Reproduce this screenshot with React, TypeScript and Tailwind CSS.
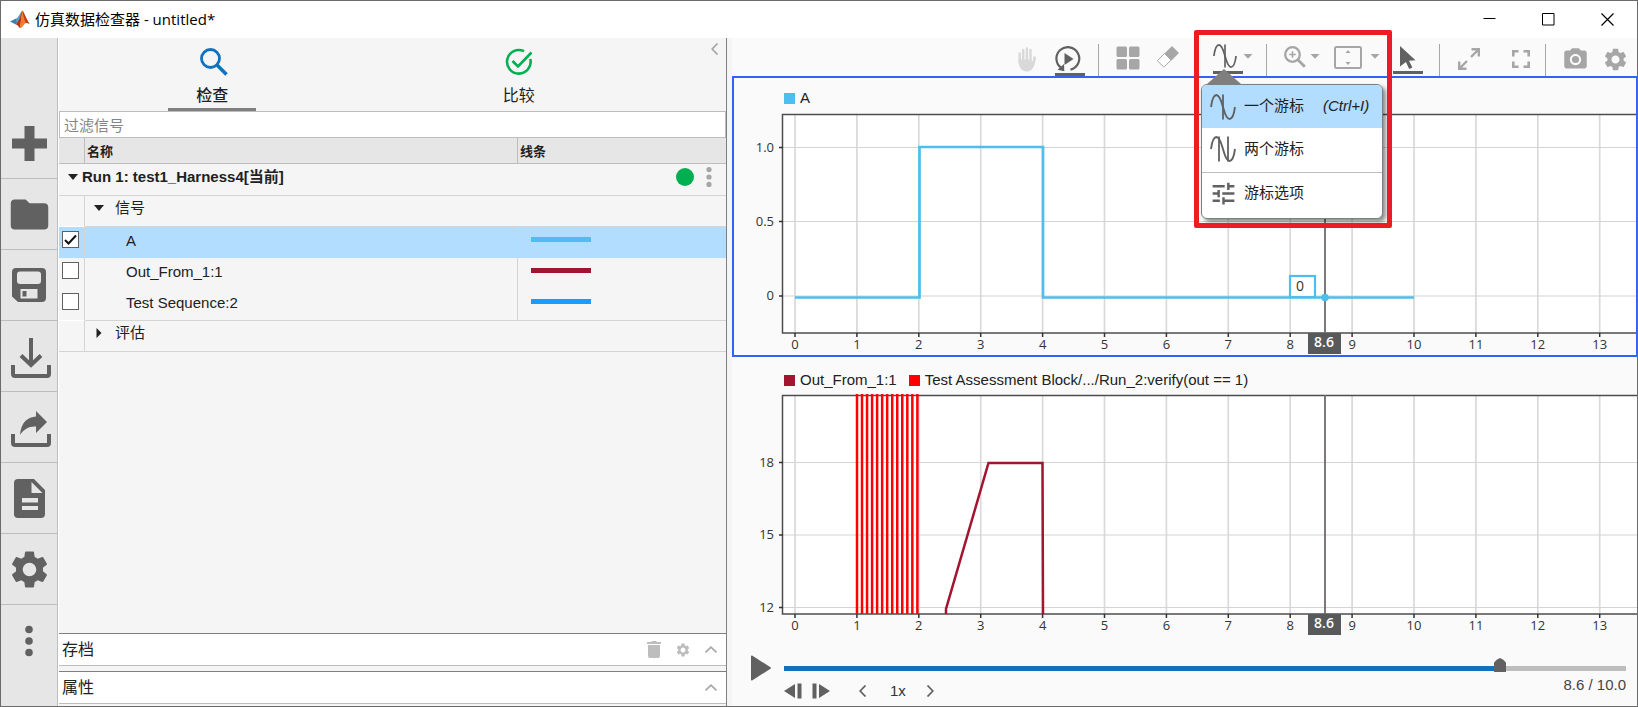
import React, { useState } from "react";
import { MdFolder, MdPhotoCamera, MdSettings, MdTune } from "react-icons/md";

/* ---------- icons ---------- */

function Logo() {
  return (
    <svg width="20" height="19" viewBox="0 0 20 19" aria-hidden="true">
      <path d="M0 11.5L6 8.6l2.8 2-3 3.8z" fill="#3d7fb5" />
      <path d="M6 8.6C8 8 9 5 11.5 1.6L12.6 .6 9.5 9.5 6.6 13z" fill="#5ba3cf" />
      <path d="M5.8 14.4L8.2 11C10.4 8 11 1.6 12.6.4 11.6 5 11.6 11 9.6 18.2 8.6 16 7.4 14.6 5.8 14.4z" fill="#b5330f" />
      <path d="M12.6.4c2 3 3.4 8.2 7 13.6-2.6-1.6-4.2-1.4-5.8 1-1.4 2-2.6 3-4.2 3.2C11 12 11.2 4 12.6.4z" fill="#ef7d2d" />
      <path d="M12.6.4c2 3 3.4 8.2 7 13.6-1.6-1-2.6-1.2-3.6-.8C14 9 13 4 12.6.4z" fill="#c23a12" />
    </svg>
  );
}

const PlusIcon = () => (
  <svg width="35" height="35" viewBox="0 0 35 35" fill="currentColor">
    <path d="M12.5 0h10v12.5H35v10H22.5V35h-10V22.5H0v-10h12.5z" />
  </svg>
);

const SaveIcon = () => (
  <svg width="34" height="34" viewBox="0 0 34 34" fill="currentColor">
    <path
      fillRule="evenodd"
      d="M4 0h26a4 4 0 0 1 4 4v26a4 4 0 0 1-4 4H6L0 28.5V4a4 4 0 0 1 4-4zM8 3.5a3 3 0 0 0-3 3V13a3 3 0 0 0 3 3h18a3 3 0 0 0 3-3V6.5a3 3 0 0 0-3-3zM8.5 21v9.5h17V21zM10.5 23h4v5.5h-4z"
    />
  </svg>
);

const Tray = () => (
  <path d="M2 27v9q0 2 2 2h32q2 0 2-2v-9" fill="none" stroke="currentColor" strokeWidth="4" />
);

const ImportIcon = () => (
  <svg width="40" height="40" viewBox="0 0 40 40">
    <Tray />
    <path d="M20 0v27M10 17.5l10 9.5 10-9.5" fill="none" stroke="currentColor" strokeWidth="4" />
  </svg>
);

const ShareIcon = () => (
  <svg width="40" height="40" viewBox="0 0 40 40">
    <Tray />
    <path d="M9 28C10 15 17 10 25 9.5V4l11 11-11 11v-6.5C18 19 13 22 9 28z" fill="currentColor" />
  </svg>
);

const DocIcon = () => (
  <svg width="31" height="39" viewBox="0 0 31 39" fill="currentColor">
    <path
      fillRule="evenodd"
      d="M4 0h16l11 11v24a4 4 0 0 1-4 4H4a4 4 0 0 1-4-4V4a4 4 0 0 1 4-4zM17.5 3v11h11zM8 19v4.5h16V19zM8 27v4h16v-4z"
    />
  </svg>
);

const DotsIcon = () => (
  <svg width="8" height="32" viewBox="0 0 8 32" fill="currentColor">
    <circle cx="4" cy="4.5" r="3.8" />
    <circle cx="4" cy="16" r="3.8" />
    <circle cx="4" cy="27.5" r="3.8" />
  </svg>
);

const SearchIcon = () => (
  <svg width="28" height="28" viewBox="0 0 28 28" fill="none" stroke="#1171be">
    <circle cx="10.5" cy="10.5" r="9" strokeWidth="2.8" />
    <path d="M17 17l9.5 9.5" strokeWidth="3.6" />
  </svg>
);

const CompareIcon = () => (
  <svg width="28" height="28" viewBox="0 0 28 28" fill="none" stroke="#00b050" strokeWidth="2.6">
    <path d="M19 3.2A11.8 11.8 0 1 0 25.3 11" />
    <path d="M7.5 13l5.5 5.5L26.5 4.5" />
  </svg>
);

const TrashIcon = () => (
  <svg width="14" height="17" viewBox="0 0 14 17" fill="currentColor">
    <path d="M4.5 0h5v1H14v2H0V1h4.5zM1 4h12v11a2 2 0 0 1-2 2H3a2 2 0 0 1-2-2z" />
  </svg>
);

function Chevron({ d }: { d: string }) {
  return (
    <svg width="12" height="12" viewBox="0 0 12 12" fill="none" stroke="currentColor" strokeWidth="1.7">
      <path d={d} />
    </svg>
  );
}

const Down = () => (
  <svg width="10" height="6" viewBox="0 0 10 6" fill="currentColor">
    <path d="M0 0h10L5 6z" />
  </svg>
);

const Caret = () => (
  <svg width="10" height="5" viewBox="0 0 10 5" fill="currentColor">
    <path d="M.5 0h9L5 4.8z" />
  </svg>
);

const Right = () => (
  <svg width="10" height="10" viewBox="0 0 10 10" fill="currentColor">
    <path d="M2.5 0l5 5-5 5z" />
  </svg>
);

const HandIcon = () => (
  <svg width="18" height="25" viewBox="0 0 18 25" fill="none" stroke="#d9d9d9" strokeLinecap="round">
    <path d="M1.7 6.5V15M5.2 3v11M8.9 1.5V14M12.5 3v11" strokeWidth="2.5" />
    <path d="M16.6 10.5c0 4-1.2 6-3 8" strokeWidth="2.6" />
    <path d="M.5 12.500h13.200v2.800l3.300-2.300c.4 5-2.600 11.500-8 11.500S.5 20 .5 14z" fill="#d9d9d9" stroke="none" />
  </svg>
);

const LoopIcon = () => (
  <svg width="26" height="26" viewBox="0 0 26 26" fill="none" stroke="#616161" strokeWidth="2.2">
    <path d="M6.500 22A11.400 11.400 0 1 1 15.500 23.600" />
    <path d="M2.500 23.800L9.300 25.300 9 18z" fill="#616161" stroke="none" />
    <path d="M9.500 7v12L18.500 13z" fill="#616161" stroke="none" />
  </svg>
);

const LayoutIcon = () => (
  <svg width="24" height="24" viewBox="0 0 24 24" fill="currentColor">
    <rect x=".5" y=".5" width="10.500" height="10.500" rx="1.500" />
    <rect x="13" y=".5" width="10.500" height="10.500" rx="1.500" />
    <rect x=".5" y="13" width="10.500" height="10.500" rx="1.500" />
    <rect x="13" y="13" width="10.500" height="10.500" rx="1.500" />
  </svg>
);

const EraserIcon = () => (
  <svg width="22" height="22" viewBox="0 0 22 22">
    <path d="M7.500 7.500L14.500.5q.5-.5 1 0L21.500 6.500q.5.500 0 1L14.500 14.500z" fill="#a6a6a6" />
    <path d="M7.500 7.500L.8 14.200q-.5.500 0 1l5.500 5.500q.5.500 1 0l6.800-6.600z" fill="#fff" stroke="#a6a6a6" />
  </svg>
);

function WaveIcon({ lines, size = 26 }: { lines: number[]; size?: number }) {
  return (
    <svg width={size} height={size} viewBox="0 0 26 26" fill="none" stroke="#616161">
      <path d="M1 13C2 5.500 4 1 6.500 1c3.500.5 5 7 6.500 12s3 12 6.500 12c2.500 0 4.500-4.500 5.500-12" strokeWidth="1.900" />
      {lines.map((x) => (
        <path key={x} d={`M${x} .5v25`} strokeWidth="1.800" />
      ))}
    </svg>
  );
}

const ZoomIcon = () => (
  <svg width="22" height="22" viewBox="0 0 22 22" fill="none" stroke="currentColor">
    <circle cx="8.500" cy="8.500" r="7.300" strokeWidth="2.300" />
    <path d="M8.500 5.200v6.600M5.200 8.500h6.600" strokeWidth="1.600" />
    <path d="M13.800 13.800l7 7" strokeWidth="2.800" />
  </svg>
);

const FitIcon = () => (
  <svg width="28" height="23" viewBox="0 0 28 23" fill="none" stroke="currentColor">
    <rect x="1" y="1" width="26" height="21" rx="1.500" strokeWidth="2" />
    <path d="M11.500 7h5L14 4zM11.500 16h5L14 19z" fill="currentColor" stroke="none" />
  </svg>
);

const PointerIcon = () => (
  <svg width="16" height="23" viewBox="0 0 16 23" fill="#616161">
    <path d="M0 0l15.500 14.300-6.500.5 3.400 6.700-3.200 1.400-3.300-6.900L0 20.500z" />
  </svg>
);

const ExpandIcon = () => (
  <svg width="22" height="22" viewBox="0 0 22 22" fill="none" stroke="currentColor" strokeWidth="2.400">
    <path d="M13.500 1.200h7.300v7.300M20.500 1.500L13 9M8.500 20.800H1.200v-7.300M1.500 20.500L9 13" />
  </svg>
);

const FullscreenIcon = () => (
  <svg width="18" height="18" viewBox="0 0 18 18" fill="none" stroke="currentColor" strokeWidth="2.600">
    <path d="M1.300 6.500V1.300H6.500M11.500 1.300h5.200V6.500M16.700 11.500v5.200H11.500M6.500 16.700H1.300V11.500" />
  </svg>
);

/* ---------- chart ---------- */

const X0 = 61;
const STEP = 61.9;
const BOTTOM = 220;
const CURSOR = 591;

type Tick = { label: string; y: number };

function Chart({ ticks, label, children }: { ticks: Tick[]; label: string; children: React.ReactNode }) {
  const xs = Array.from({ length: 14 }, (_, i) => i);
  return (
    <svg className="block h-[242px] w-full" role="img" aria-label={label}>
      <rect x="48" y="1" width="3000" height="219" fill="#fff" />
      {xs.map((i) => (
        <path key={i} d={`M${X0 + i * STEP} 1V${BOTTOM}`} stroke="#d9d9d9" strokeWidth="1.700" />
      ))}
      {ticks.map((t) => (
        <path key={t.label} d={`M48 ${t.y}H3000`} stroke="#d4d4d4" strokeWidth="1.200" />
      ))}
      <rect x="48.500" y="1.500" width="3000" height="218.500" fill="none" stroke="#4d4d4d" strokeWidth="1.500" />
      <g className="font-['Open_Sans','Noto_Sans',sans-serif] text-[13px]" fill="#333">
        {xs.map((i) => (
          <g key={i}>
            <path d={`M${X0 + i * STEP} 220v4`} stroke="#333" strokeWidth="1.500" />
            <text x={X0 + i * STEP} y="236" textAnchor="middle">
              {i}
            </text>
          </g>
        ))}
        {ticks.map((t) => (
          <g key={t.label}>
            <path d={`M45 ${t.y}h4`} stroke="#333" strokeWidth="1.500" />
            <text x="40" y={t.y + 4} textAnchor="end">
              {t.label}
            </text>
          </g>
        ))}
      </g>
      <path d={`M${CURSOR} 1V${BOTTOM}`} stroke="#6e6a6c" strokeWidth="1.800" />
      {children}
      <rect x={CURSOR - 17} y="220" width="33" height="21" fill="#58595b" />
      <text
        x={CURSOR - 1}
        y="234"
        textAnchor="middle"
        fill="#fff"
        className="font-['Open_Sans','Noto_Sans',sans-serif] text-[14px] font-semibold"
      >
        8.6
      </text>
    </svg>
  );
}

function LegendItem({ color, text }: { color: string; text: string }) {
  return (
    <span className="flex items-center gap-[5px]">
      <i className={`size-[11px] ${color}`} />
      {text}
    </span>
  );
}

/* ---------- left panel ---------- */

const sideButtons: { label: string; icon: React.ReactNode; pad?: string }[] = [
  { label: "新建", icon: <PlusIcon /> },
  { label: "打开", icon: <MdFolder size={45} /> },
  { label: "保存", icon: <SaveIcon /> },
  { label: "导入", icon: <ImportIcon />, pad: "pt-1 pl-1" },
  { label: "导出", icon: <ShareIcon />, pad: "pl-1" },
  { label: "报告", icon: <DocIcon /> },
  { label: "预设", icon: <MdSettings size={45} /> },
  { label: "更多", icon: <DotsIcon /> },
];

const initialSignals = [
  { name: "A", color: "bg-[#4dbeee]", on: true },
  { name: "Out_From_1:1", color: "bg-[#a2142f]", on: false },
  { name: "Test Sequence:2", color: "bg-[#1a9bff]", on: false },
];

function SignalTable() {
  const [signals, setSignals] = useState(initialSignals);
  const toggle = (i: number) => setSignals(signals.map((s, k) => (k === i ? { ...s, on: !s.on } : s)));
  return (
    <table className="w-full table-fixed border-separate border-spacing-0 text-left text-[15px] leading-5 text-[#212121]">
      <colgroup>
        <col className="w-[26px]" />
        <col className="w-[433px]" />
        <col />
      </colgroup>
      <thead>
        <tr className="h-[26px] bg-[#e6e6e6] text-[13px]">
          <td className="border-r border-b border-[#bdbdbd] p-0" />
          <th className="border-r border-b border-[#bdbdbd] p-0 pt-0.5 pl-0.5 font-bold">名称</th>
          <th className="border-b border-[#bdbdbd] p-0 pt-0.5 pl-0.5 font-bold">线条</th>
        </tr>
      </thead>
      <tbody>
        <tr className="h-8">
          <td colSpan={3} className="border-b border-[#d4d4d4] p-0">
            <div className="flex items-center pr-[14px] pb-1.5 pl-[9px]">
              <button aria-label="折叠 Run 1" className="mr-1">
                <Down />
              </button>
              <span className="flex-1 font-bold">Run 1: test1_Harness4[当前]</span>
              <span className="mr-3 size-[18px] rounded-full bg-[#00b050]" />
              <button aria-label="运行菜单" className="text-[#a6a6a6]">
                <svg width="6" height="20" viewBox="0 0 6 20" fill="currentColor">
                  <circle cx="3" cy="2.600" r="2.600" />
                  <circle cx="3" cy="10" r="2.600" />
                  <circle cx="3" cy="17.400" r="2.600" />
                </svg>
              </button>
            </div>
          </td>
        </tr>
        <tr className="h-[31px]">
          <td className="border-r border-b border-r-[#d4d4d4] border-b-white p-0" />
          <td colSpan={2} className="border-b border-[#d4d4d4] p-0 pb-1.5 pl-[9px]">
            <button className="flex items-center gap-[11px]">
              <Down />
              信号
            </button>
          </td>
        </tr>
        {signals.map((s, i) => (
          <tr key={s.name} className={i === 0 ? "h-[31px] bg-[#b2ddff]" : "h-[31px]"}>
            <td className="border-r border-[#d4d4d4] p-0 pb-1.5 pl-[3px]">
              <span className="relative block size-[17px]">
                <input
                  id={`sig-${i}`}
                  type="checkbox"
                  checked={s.on}
                  onChange={() => toggle(i)}
                  className="peer block size-[17px] appearance-none border border-[#616161] bg-white"
                />
                <svg
                  className="pointer-events-none absolute inset-0 hidden peer-checked:block"
                  width="17"
                  height="17"
                  viewBox="0 0 17 17"
                  fill="none"
                  stroke="#111"
                  strokeWidth="2"
                >
                  <path d="M3 9l3.500 3.500L14 4.500" />
                </svg>
              </span>
            </td>
            <td className="border-r border-[#d4d4d4] p-0 pb-1 pl-[41px]">
              <label htmlFor={`sig-${i}`}>{s.name}</label>
            </td>
            <td className="p-0 pb-1.5 pl-[13px]">
              <div className={`h-[5px] w-[60px] ${s.color}`} />
            </td>
          </tr>
        ))}
        <tr className="h-8">
          <td className="border-t border-r border-b border-[#d4d4d4] border-t-white p-0" />
          <td colSpan={2} className="border-t border-b border-[#d4d4d4] p-0 pb-1.5 pl-[9px]">
            <button className="flex items-center gap-[11px]">
              <Right />
              评估
            </button>
          </td>
        </tr>
      </tbody>
    </table>
  );
}

function LeftPanel() {
  return (
    <section className="flex w-[669px] shrink-0 flex-col border-r border-l border-r-[#7f7f7f] border-l-white bg-[#f5f5f5]">
      <div className="flex text-[#212121]">
        <div className="flex flex-1 justify-center">
          <button className="flex w-22 flex-col items-center border-b-3 border-[#808080] pt-2 text-base leading-6 font-medium">
            <span className="mb-1.5 flex h-8 items-center pl-1">
              <SearchIcon />
            </span>
            检查
          </button>
        </div>
        <div className="flex flex-1 justify-center">
          <button className="flex w-22 flex-col items-center border-b-3 border-transparent pt-2 text-base leading-6">
            <span className="mb-1.5 flex h-8 items-center">
              <CompareIcon />
            </span>
            比较
          </button>
        </div>
        <button aria-label="收起面板" className="flex w-[54px] items-start justify-end pt-[5px] pr-[5px] text-[#a6a6a6]">
          <Chevron d="M8.500 0.500L3.200 6l5.300 5.500" />
        </button>
      </div>
      <input
        aria-label="过滤信号"
        placeholder="过滤信号"
        className="h-[27px] w-full rounded-none border border-[#bdbdbd] bg-white px-1 pt-0.5 text-[15px] leading-5 outline-none placeholder:text-[#858585]"
      />
      <SignalTable />
      <div className="flex-1" />
      <div className="flex h-[33px] items-center border-t border-b border-t-[#7f7f7f] border-b-[#bdbdbd] bg-white pr-[9px] pl-[3px] text-base text-[#212121]">
        <span className="flex-1">存档</span>
        <span className="flex items-center text-[#bdbdbd]">
          <button aria-label="删除" className="mr-[14px]">
            <TrashIcon />
          </button>
          <button aria-label="存档设置" className="mr-[14px]">
            <MdSettings size={16} />
          </button>
          <button aria-label="展开存档" className="text-[#a6a6a6]">
            <Chevron d="M.5 8.500L6 3.200l5.500 5.300" />
          </button>
        </span>
      </div>
      <div className="mt-[5px] mb-0.5 flex h-[33px] items-center border-t border-b border-t-[#7f7f7f] border-b-[#bdbdbd] bg-white pr-[9px] pl-[3px] text-base text-[#212121]">
        <span className="flex-1">属性</span>
        <button aria-label="展开属性" className="text-[#a6a6a6]">
          <Chevron d="M.5 8.500L6 3.200l5.500 5.300" />
        </button>
      </div>
    </section>
  );
}

/* ---------- toolbar ---------- */

const Sep = () => <span className="mt-1.5 w-px self-stretch bg-[#a6a6a6]" />;

function CursorMenu() {
  return (
    <div className="absolute top-[31px] -left-3 z-20 w-[182px]">
      <svg width="34" height="15" viewBox="0 0 34 15" className="ml-1.5 block">
        <path d="M17 0l17 15H0z" fill="#7f7f7f" />
      </svg>
      <ul className="overflow-hidden rounded-md border border-[#7f7f7f] bg-white text-[15px] text-[#212121] shadow-[3px_3px_4px_rgba(0,0,0,0.45)]">
        <li>
          <button className="flex h-[43px] w-full items-center gap-2 bg-[#b2ddff] pl-2">
            <WaveIcon lines={[13]} />
            一个游标
            <i className="ml-[11px]">(Ctrl+I)</i>
          </button>
        </li>
        <li>
          <button className="flex h-[45px] w-full items-center gap-2 border-b border-[#bdbdbd] pb-0.5 pl-2">
            <WaveIcon lines={[9, 18]} />
            两个游标
          </button>
        </li>
        <li>
          <button className="flex h-[45px] w-full items-center gap-2 pb-1 pl-2">
            <span className="flex w-[26px] justify-center text-[#616161]">
              <MdTune size={29} className="shrink-0" />
            </span>
            游标选项
          </button>
        </li>
      </ul>
    </div>
  );
}

function Toolbar() {
  return (
    <div className="flex h-[38px] items-center justify-end pr-0.5 text-[#a6a6a6]">
      <button aria-label="平移" className="mr-[19px] pt-1">
        <HandIcon />
      </button>
      <button aria-label="回放" className="mr-[13px] flex h-full w-[30px] items-end border-b-3 border-[#616161] pb-px">
        <LoopIcon />
      </button>
      <Sep />
      <button aria-label="布局" className="ml-[17px] pt-0.5">
        <LayoutIcon />
      </button>
      <button aria-label="清除" className="ml-[17px]">
        <EraserIcon />
      </button>
      <div className="relative mr-[13px] ml-[34px] flex h-full">
        <button aria-label="显示游标" className="mb-0.5 flex w-[30px] items-end border-b-3 border-[#616161] pb-[3px]">
          <WaveIcon lines={[13]} size={24} />
        </button>
        <button aria-label="游标菜单" className="pb-0.5">
          <Caret />
        </button>
        <CursorMenu />
        <div className="pointer-events-none absolute -top-2 -left-[19px] z-30 h-[198px] w-[198px] rounded-xs border-5 border-[#ed1c24]" />
      </div>
      <Sep />
      <button aria-label="放大" className="ml-[17px]">
        <ZoomIcon />
      </button>
      <button aria-label="缩放菜单" className="ml-1 pb-0.5">
        <Caret />
      </button>
      <button aria-label="适应视图" className="ml-[14px]">
        <FitIcon />
      </button>
      <button aria-label="适应菜单" className="ml-2 pb-0.5">
        <Caret />
      </button>
      <button aria-label="选择" className="mr-4 ml-[13px] flex h-[34px] w-[30px] items-end justify-center border-b-3 border-[#616161] pb-0.5">
        <PointerIcon />
      </button>
      <Sep />
      <button aria-label="展开" className="ml-[18px] pt-1">
        <ExpandIcon />
      </button>
      <button aria-label="全屏" className="mr-[15px] ml-8 pt-1">
        <FullscreenIcon />
      </button>
      <Sep />
      <button aria-label="快照" className="ml-4 pt-1">
        <MdPhotoCamera size={27} />
      </button>
      <button aria-label="设置" className="mr-1.5 ml-[13px] pt-1">
        <MdSettings size={27} />
      </button>
    </div>
  );
}

/* ---------- playback ---------- */

function Playback() {
  return (
    <div className="flex pr-[11px] pl-[19px] text-[15px] text-[#333]">
      <button aria-label="播放" className="mt-[19px] mr-[13px] self-start text-[#616161]">
        <svg width="20" height="26" viewBox="0 0 20 26" fill="currentColor">
          <path d="M0 1.500Q0 0 1.500.8L19.500 12.300q.8.700 0 1.400L1.500 25.200Q0 26 0 24.500z" />
        </svg>
      </button>
      <div className="flex-1 pt-[22px]">
        <div className="relative flex h-[21px] items-center">
          <div className="h-[5px] w-[85%] bg-[#1171be]" />
          <div className="h-[5px] flex-1 bg-[#bdbdbd]" />
          <svg className="absolute top-0 left-[85%] -translate-x-1/2" width="12" height="14" viewBox="0 0 12 14" fill="#616161">
            <path d="M0 4.500Q2.500 1 6 0 9.500 1 12 4.500V14H0z" />
          </svg>
          <input
            type="range"
            min="0"
            max="10"
            step="0.1"
            defaultValue="8.6"
            aria-label="回放时间"
            className="absolute inset-0 w-full opacity-0"
          />
        </div>
        <div className="flex items-start justify-between">
          <div className="flex h-6 items-center text-[#616161]">
            <button aria-label="后退一步">
              <svg width="18" height="16" viewBox="0 0 18 16" fill="currentColor">
                <path d="M0 8L11 1v14zM13.500.500h4v15h-4z" />
              </svg>
            </button>
            <button aria-label="前进一步" className="ml-2.5">
              <svg width="18" height="16" viewBox="0 0 18 16" fill="currentColor">
                <path d="M18 8L7 1v14zM.500.500h4v15h-4z" />
              </svg>
            </button>
            <button aria-label="减速" className="ml-[27px]">
              <Chevron d="M8.500 0.500L3.200 6l5.300 5.500" />
            </button>
            <span className="mr-[18px] ml-[21px] text-[#333]">1x</span>
            <button aria-label="加速">
              <Chevron d="M3.500 0.500L8.800 6l-5.300 5.500" />
            </button>
          </div>
          <span className="leading-3 text-[#444]">8.6 / 10.0</span>
        </div>
      </div>
    </div>
  );
}

/* ---------- app ---------- */

const redLines = Array.from({ length: 13 }, (_, i) => 123 + i * 5.03);

export default function App() {
  return (
    <div className="flex min-h-screen flex-col border border-[#6b6b6b] bg-white font-['Liberation_Sans','Noto_Sans_CJK_SC',sans-serif]">
      <header className="flex h-[37px] items-center pl-[9px] font-['Open_Sans','Noto_Sans_CJK_SC',sans-serif] text-[15px] text-black">
        <Logo />
        <h1 className="ml-[5px] flex-1">仿真数据检查器 - untitled*</h1>
        <button aria-label="最小化" className="flex w-[59px] justify-center">
          <svg width="13" height="13" stroke="currentColor">
            <path d="M.5 5.500h12" />
          </svg>
        </button>
        <button aria-label="最大化" className="flex w-[58px] justify-center">
          <svg width="13" height="13" fill="none" stroke="currentColor">
            <path d="M.5.500h11.500v11.500H.5z" />
          </svg>
        </button>
        <button aria-label="关闭" className="flex w-[60px] justify-center">
          <svg width="13" height="13" stroke="currentColor" strokeWidth="1.200">
            <path d="M.5.500l12 12M12.500.500l-12 12" />
          </svg>
        </button>
      </header>

      <div className="flex flex-1">
        <nav className="flex w-[57px] shrink-0 flex-col border-r border-[#bdbdbd] bg-[#e6e6e6] pt-[70px]">
          {sideButtons.map((b, i) => (
            <button
              key={b.label}
              aria-label={b.label}
              className={`flex h-[71px] shrink-0 items-center justify-center text-[#616161] ${b.pad ?? ""} ${
                i < sideButtons.length - 1 ? "border-b border-[#bdbdbd]" : ""
              }`}
            >
              {b.icon}
            </button>
          ))}
        </nav>

        <LeftPanel />

        <main className="min-w-0 flex-1 border-l-5 border-[#f5f5f5] bg-[#fafafa] text-[#212121]">
          <Toolbar />
          <section className="border-2 border-r border-[#2f62ff]">
            <div className="flex h-[35px] items-center pt-[5px] pl-[50px] text-[15px] leading-5">
              <LegendItem color="bg-[#4dbeee]" text="A" />
            </div>
            <Chart
              label="A"
              ticks={[
                { label: "1.0", y: 34.5 },
                { label: "0.5", y: 108.5 },
                { label: "0", y: 183 },
              ]}
            >
              <path d="M61 184.500H185.500V34H309V184.500H680" fill="none" stroke="#4dbeee" strokeWidth="2.700" />
              <rect x="556" y="163" width="25" height="21" fill="#fff" stroke="#4dbeee" strokeWidth="2.200" />
              <text x="566" y="178" textAnchor="middle" fill="#333" className="font-['Open_Sans','Noto_Sans',sans-serif] text-[14px]">
                0
              </text>
              <circle cx={CURSOR} cy="184.500" r="3.800" fill="#4dbeee" />
            </Chart>
          </section>
          <section className="pl-0.5">
            <div className="flex h-[37px] items-center gap-3 pt-[9px] pl-[50px] text-[15px] leading-5">
              <LegendItem color="bg-[#a2142f]" text="Out_From_1:1" />
              <LegendItem color="bg-[#ff0000]" text="Test Assessment Block/.../Run_2:verify(out == 1)" />
            </div>
            <Chart
              label="Out_From_1:1"
              ticks={[
                { label: "18", y: 68.5 },
                { label: "15", y: 141 },
                { label: "12", y: 213.5 },
              ]}
            >
              {redLines.map((x) => (
                <path key={x} d={`M${x} 0V220`} stroke="#ff0000" strokeWidth="2.500" />
              ))}
              <path d="M212 220V215L254.500 69H308.500L309 220" fill="none" stroke="#a2142f" strokeWidth="2.500" />
            </Chart>
          </section>
          <Playback />
        </main>
      </div>
    </div>
  );
}
